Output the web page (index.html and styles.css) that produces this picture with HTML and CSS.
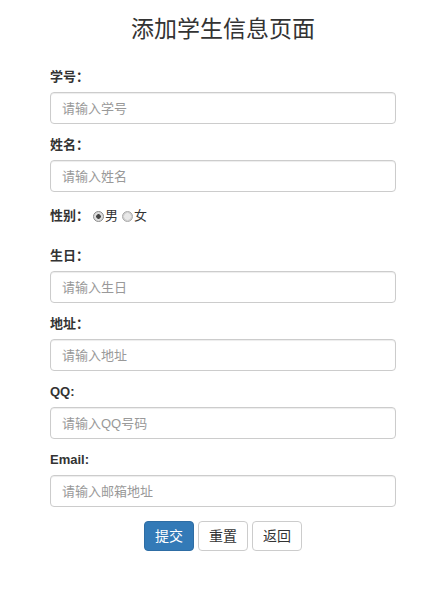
FILE: index.html
```html
<!DOCTYPE html>
<html lang="zh-CN">
<head>
    <meta charset="UTF-8">
    <title>添加学生信息页面</title>
    <link rel="stylesheet" href="styles.css">
</head>
<body>
<div class="container">
    <h3 class="title">添加学生信息页面</h3>
    <form action="#" method="post">
        <div class="form-group">
            <label for="sid">学号：</label>
            <input type="text" class="form-control" id="sid" name="sid" placeholder="请输入学号">
        </div>
        <div class="form-group">
            <label for="name">姓名：</label>
            <input type="text" class="form-control" id="name" name="name" placeholder="请输入姓名">
        </div>
        <div class="form-group radio-row">
            <label>性别：</label>
            <input type="radio" name="gender" value="男" checked>男
            <input type="radio" name="gender" value="女">女
        </div>
        <div class="form-group">
            <label for="birthday">生日：</label>
            <input type="text" class="form-control" id="birthday" name="birthday" placeholder="请输入生日">
        </div>
        <div class="form-group">
            <label for="address">地址：</label>
            <input type="text" class="form-control" id="address" name="address" placeholder="请输入地址">
        </div>
        <div class="form-group">
            <label for="qq">QQ:</label>
            <input type="text" class="form-control" id="qq" name="qq" placeholder="请输入QQ号码">
        </div>
        <div class="form-group">
            <label for="email">Email:</label>
            <input type="text" class="form-control" id="email" name="email" placeholder="请输入邮箱地址">
        </div>
        <div class="btn-row">
            <input class="btn btn-primary" type="submit" value="提交">
            <input class="btn btn-default" type="reset" value="重置">
            <input class="btn btn-default" type="button" value="返回">
        </div>
    </form>
</div>
</body>
</html>
```
FILE: styles.css
```css
*{
    margin: 0;
    padding: 0;
    box-sizing: border-box;
}
body{
    font-family: "Liberation Sans", "Noto Sans CJK SC", sans-serif;
    font-size: 13px;
    line-height: 20px;
    color: #333;
    background: #fff;
}
.container{
    width: 346px;
    margin-left: 50px;
}
.title{
    margin: 9px 0 18px;
    font-size: 23px;
    line-height: 40px;
    font-weight: normal;
    text-align: center;
    color: #333;
}
.form-group{
    margin-bottom: 11px;
}
.form-group label{
    display: block;
    margin-bottom: 5px;
    font-weight: bold;
}
.form-control{
    display: block;
    width: 100%;
    height: 32px;
    padding: 6px 11px;
    font-family: inherit;
    font-size: 13px;
    color: #555;
    background: #fff;
    border: 1px solid #ccc;
    border-radius: 4px;
    box-shadow: inset 0 1px 1px rgba(0,0,0,.075);
}
.form-control::placeholder{
    color: #999;
}
.radio-row{
    display: flex;
    align-items: center;
    height: 26px;
    margin-bottom: 17px;
}
.radio-row label{
    display: inline;
    margin: 0 4px 0 0;
}
.radio-row input{
    -webkit-appearance: none;
    appearance: none;
    width: 11px;
    height: 11px;
    margin: 0 1px 0 0;
    border: 1px solid #a8a8a8;
    border-radius: 50%;
    background: radial-gradient(circle, #e8e8e8 0 3px, #d4d4d4 3.5px);
}
.radio-row input:checked{
    border-color: #8a8a8a;
    background: radial-gradient(circle, #444 0 2px, #dcdcdc 2.6px);
}
.radio-row input + input{
    margin-left: 4px;
}
.btn-row{
    padding-top: 3px;
    text-align: center;
    font-size: 0;
}
.btn{
    display: inline-block;
    height: 30px;
    padding: 4px 10px;
    margin: 0 2px;
    font-family: inherit;
    font-size: 14px;
    line-height: 20px;
    border: 1px solid #ccc;
    border-radius: 4px;
    background: #fff;
    color: #333;
    cursor: pointer;
}
.btn-primary{
    background: #337ab7;
    border-color: #2e6da4;
    color: #fff;
}
```
